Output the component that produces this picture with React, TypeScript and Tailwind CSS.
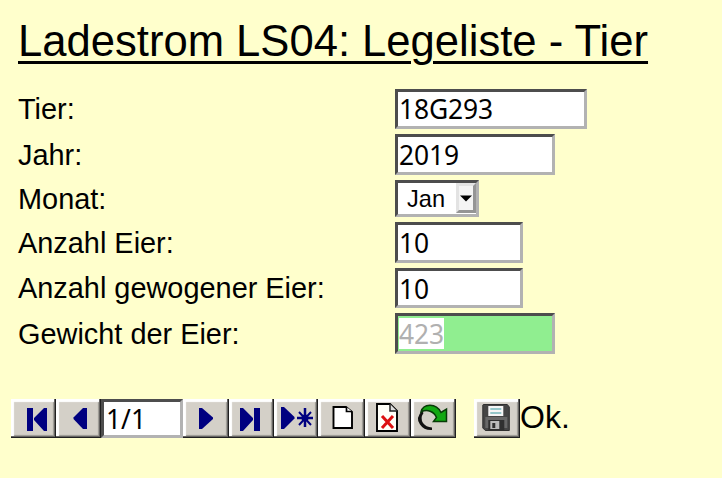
import type { ReactNode } from "react";

const bevel =
  "border-[3px] border-t-[#4d4d4d] border-l-[#4d4d4d] border-r-[#b2b2b2] border-b-[#b2b2b2]";

function Field({ label, height, leading, children }: { label: string; height: string; leading: string; children: ReactNode }) {
  return (
    <div className={`mb-[5px] flex ${height} ${leading}`}>
      <label className="w-[377px] shrink-0 text-[28.9px] whitespace-nowrap">{label}</label>
      {children}
    </div>
  );
}

function Box({ width, leading, children }: { width: string; leading: string; children: ReactNode }) {
  return (
    <div
      className={`${bevel} ${width} ${leading} h-full bg-white pl-px font-['Noto_Sans',sans-serif] text-[26.4px] tracking-[-0.1px] whitespace-nowrap`}
    >
      {children}
    </div>
  );
}

function ToolButton({ width, children }: { width: string; children: ReactNode }) {
  return (
    <button
      type="button"
      className={`${width} h-[39px] shrink-0 bg-[#d4d0c8] shadow-[inset_-1px_-1px_0_#202020,inset_-2px_-2px_0_#666462,inset_3px_3px_1px_#ffffff,inset_-3px_-3px_1px_#9b9893]`}
    >
      <svg className="block h-[39px] w-[45px] max-w-none" viewBox="0 0 45 39">
        {children}
      </svg>
    </button>
  );
}

const navy = "#000080";

export default function App() {
  return (
    <main className="h-[478px] w-[722px] overflow-hidden bg-[#ffffcc] font-['Liberation_Sans',Arial,sans-serif] text-black">
      <h1 className="ml-[18px] h-[89px] pt-[16px] text-[43.6px] leading-[50px] whitespace-nowrap underline decoration-[3px] underline-offset-[5px]">
        Ladestrom LS04: Legeliste - Tier
      </h1>
      <form className="ml-[18px] flex h-[310px] flex-col">
        <Field label="Tier:" height="h-[40px]" leading="leading-[40px]">
          <Box width="w-[192px]" leading="leading-[34px]">18G293</Box>
        </Field>
        <Field label="Jahr:" height="h-[41px]" leading="leading-[42px]">
          <Box width="w-[160px]" leading="leading-[36px]">2019</Box>
        </Field>
        <Field label="Monat:" height="h-[37px]" leading="leading-[38px]">
          <div className={`${bevel} flex h-[37px] w-[84px] bg-white pb-px`}>
            <span className="w-[58px] pl-[9px] text-[23.6px] leading-[33px]">Jan</span>
            <span className="flex w-[20px] items-center justify-center border-[3px] border-t-[#e3e3e3] border-r-[#959595] border-b-[#959595] border-l-[#e3e3e3] bg-[#f4f4f4]">
              <svg className="h-[7px] w-[12px] shrink-0" viewBox="0 0 12 7">
                <path d="M0 .5H12L6 6.5Z" />
              </svg>
            </span>
          </div>
        </Field>
        <Field label="Anzahl Eier:" height="h-[41px]" leading="leading-[42px]">
          <Box width="w-[128px]" leading="leading-[36px]">10</Box>
        </Field>
        <Field label="Anzahl gewogener Eier:" height="h-[40px]" leading="leading-[41px]">
          <Box width="w-[128px]" leading="leading-[36px]">10</Box>
        </Field>
        <Field label="Gewicht der Eier:" height="h-[41px]" leading="leading-[42px]">
          <div className={`${bevel} h-full w-[160px] bg-[#90ee90] pt-[2px] pl-px`}>
            <span className="block h-[31px] w-[45px] bg-white font-['Noto_Sans',sans-serif] text-[26.4px] leading-[33px] tracking-[-0.1px] text-[#b0b0b0]">
              423
            </span>
          </div>
        </Field>
      </form>
      <nav className="ml-[11px] flex h-[39px]">
        <ToolButton width="w-[45px]">
          <path fill={navy} d="M16 9H22V32H16ZM36 9V32H33L23 21V19L33 9Z" />
        </ToolButton>
        <ToolButton width="w-[45px]">
          <path fill={navy} d="M31 9V30H27L17.500 20V18.500L27 9Z" />
        </ToolButton>
        <div
          className={`${bevel} h-[39px] w-[82px] bg-white pl-[2px] font-['Noto_Sans',sans-serif] text-[26.4px] leading-[34px]`}
        >
          1/1
        </div>
        <ToolButton width="w-[46px]">
          <path fill={navy} d="M16 9H19L30 18.500V20L19 30H16Z" />
        </ToolButton>
        <ToolButton width="w-[45px]">
          <path fill={navy} d="M11 9H14L24 19V21L14 32H11ZM25 9H31V32H25Z" />
        </ToolButton>
        <ToolButton width="w-[44px]">
          <path fill={navy} d="M7 8H10L20.500 18V19.500L10 30H7Z" />
          <path stroke={navy} strokeWidth="2.500" d="M31 9V28M23 19H39" />
          <path stroke={navy} strokeWidth="2" d="M25 13L37 26M37 13L25 26" />
          <circle cx="31" cy="19" r="3.500" fill={navy} />
        </ToolButton>
        <ToolButton width="w-[47px]">
          <path fill="#fff" stroke="#000" strokeWidth="1.900" d="M15.500 8H28L34 13V29H15.500Z" />
          <path fill="#fff" stroke="#000" strokeWidth="1.700" d="M28.500 8V12.500H34" />
        </ToolButton>
        <ToolButton width="w-[46px]">
          <path fill="#fffff8" stroke="#000" strokeWidth="1.900" d="M12 5H25L32 12V32H12Z" />
          <path fill="#ddd" stroke="#222" strokeWidth="1.500" d="M25 5V12H32" />
          <path stroke="#dc1010" strokeWidth="3" d="M17 17L28 29M28 17L17 29" />
        </ToolButton>
        <ToolButton width="w-[45px]">
          <path
            fill="#111"
            d="M11 12Q4 19 9 25.500Q13 31.500 21 31V28.500Q15 28 12 24Q9 19 12.500 14Z"
          />
          <path
            fill="#12a812"
            stroke="#073b07"
            strokeWidth="1.500"
            d="M10 13C12 4.500 25 3.500 30 13.500L35.500 10V22.500H22.500L25.500 18.500C23 12 16 10 10 13Z"
          />
        </ToolButton>
        <div className="ml-[18px] flex">
          <ToolButton width="w-[46px]">
            <g transform="translate(-0.7 0)">
              <path fill="#454545" stroke="#303030" d="M10 5.500H34L36 8V31.500H12L9.500 29V6Z" />
              <path fill="#686868" d="M12 18H34V29H12Z" />
              <path fill="#f6f6f6" d="M15 7H30V17H15Z" />
              <path stroke="#75b8bc" strokeWidth="1.500" d="M17 10H28M17 14H28" />
              <path fill="#303030" d="M15 21H31V31H15Z" />
              <path fill="#bcbcbc" d="M17 22H26V30H17Z" />
              <path fill="#303030" d="M19 24H22V29H19Z" />
            </g>
          </ToolButton>
          <span className="text-[32px] leading-[37px]">Ok.</span>
        </div>
      </nav>
    </main>
  );
}
